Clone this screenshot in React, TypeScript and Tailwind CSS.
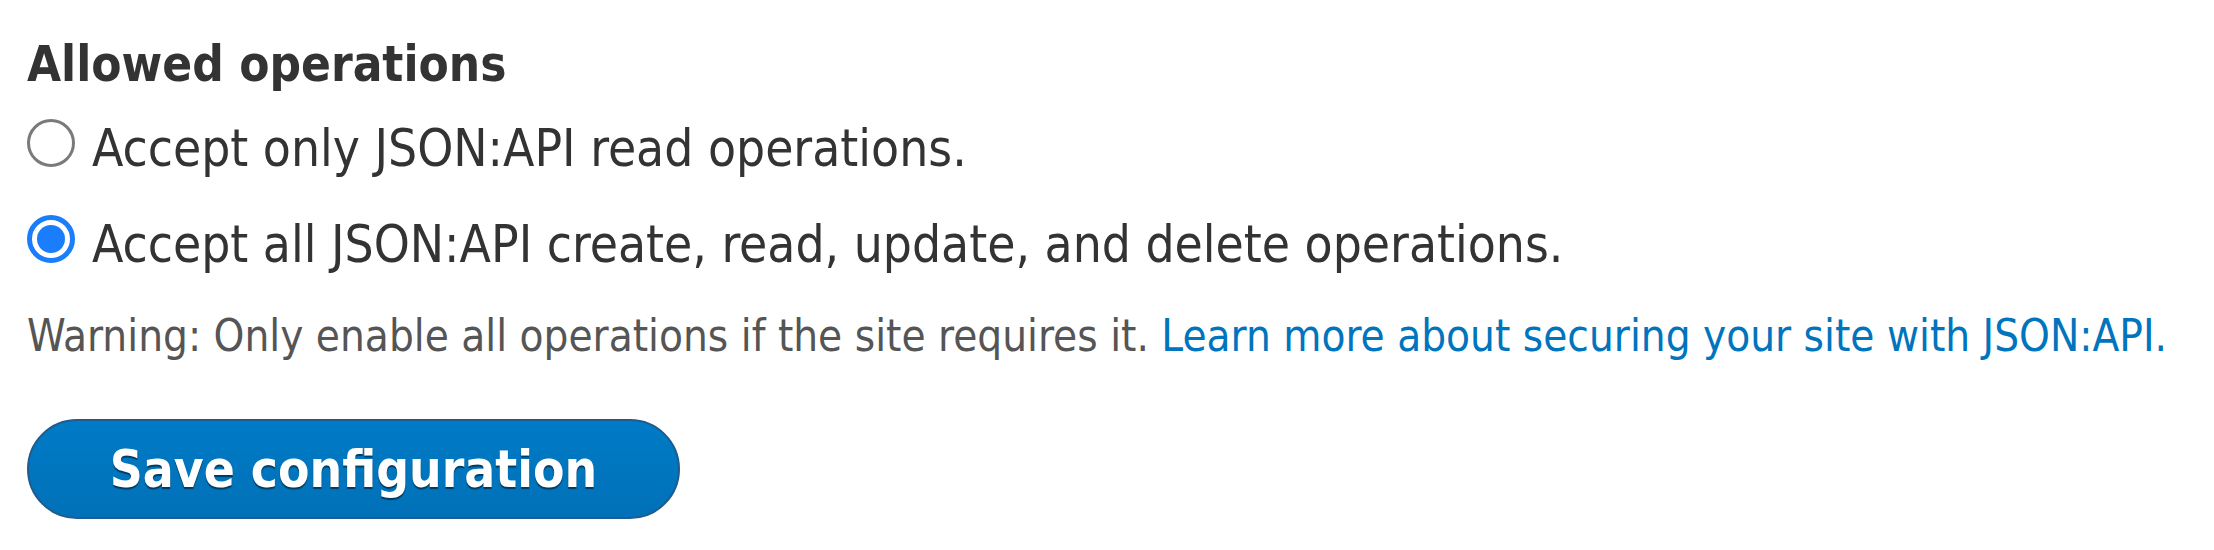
import React, { useState } from "react";

const options = [
  { id: "r", label: "Accept only JSON:API read operations." },
  { id: "rw", label: "Accept all JSON:API create, read, update, and delete operations." },
];

const Radio = ({ checked }: { checked: boolean }) =>
  checked ? (
    <span className="flex h-[48px] w-[48px] shrink-0 items-center justify-center rounded-full border-[5px] border-[#1a7dfb] bg-white">
      <span className="h-[28px] w-[28px] rounded-full bg-[#1a7dfb]" />
    </span>
  ) : (
    <span className="h-[48px] w-[48px] shrink-0 rounded-full border-[3px] border-[#7a7a7a] bg-white" />
  );

export default function App() {
  const [mode, setMode] = useState("rw");

  return (
    <div className="min-h-[550px] bg-white pl-[27px] pt-[35px] font-['DejaVu_Sans_Condensed','DejaVu_Sans',sans-serif] text-[#333]">
      <h2 className="text-[49px] font-bold leading-[60px]">Allowed operations</h2>

      <div className="mt-[24px] flex flex-col gap-[36px]">
        {options.map((o) => (
          <label
            key={o.id}
            onClick={() => setMode(o.id)}
            className="flex cursor-pointer items-start gap-[17px] whitespace-nowrap text-[51px] leading-[60px]"
          >
            <Radio checked={mode === o.id} />
            <span>{o.label}</span>
          </label>
        ))}
      </div>

      <p className="mt-[35px] whitespace-nowrap text-[43.6px] leading-[52px] text-[#555]">
        Warning: Only enable all operations if the site requires it.{" "}
        <a href="#" className="text-[#0074bd]">
          Learn more about securing your site with JSON:API.
        </a>
      </p>

      <button className="mt-[57px] h-[100px] w-[653px] rounded-full border-2 border-[#1e5c90] bg-gradient-to-b from-[#007bc6] to-[#0071b8] pt-[2px] text-[51px] font-bold text-white [text-shadow:0_2px_1px_rgba(0,0,0,0.5)]">
        Save configuration
      </button>
    </div>
  );
}
